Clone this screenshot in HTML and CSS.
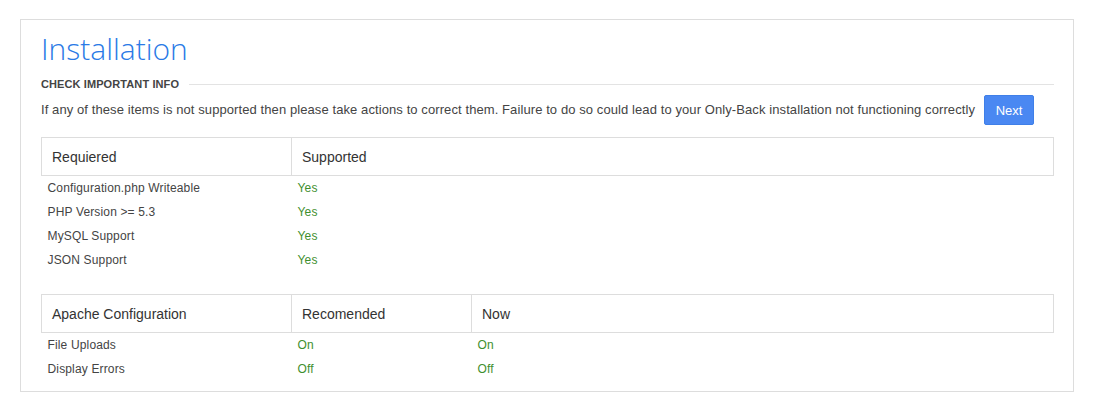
FILE: index.html
```html
<!DOCTYPE html>
<html>
<head>
<meta charset="utf-8">
<link rel="stylesheet" href="styles.css">
</head>
<body>
<div class="panel">
  <h1 class="title">Installation</h1>
  <div class="section-head">
    <span class="section-label">CHECK IMPORTANT INFO</span>
    <span class="section-line"></span>
  </div>
  <div class="notice">
    <p class="notice-text">If any of these items is not supported then please take actions to correct them. Failure to do so could lead to your Only-Back installation not functioning correctly</p>
    <button class="btn-next">Next</button>
  </div>

  <table class="req-table">
    <colgroup><col class="c1"><col></colgroup>
    <thead>
      <tr><th>Requiered</th><th>Supported</th></tr>
    </thead>
    <tbody>
      <tr><td>Configuration.php Writeable</td><td class="ok">Yes</td></tr>
      <tr><td>PHP Version &gt;= 5.3</td><td class="ok">Yes</td></tr>
      <tr><td>MySQL Support</td><td class="ok">Yes</td></tr>
      <tr><td>JSON Support</td><td class="ok">Yes</td></tr>
    </tbody>
  </table>

  <table class="req-table apache">
    <colgroup><col class="c1"><col class="c2"><col></colgroup>
    <thead>
      <tr><th>Apache Configuration</th><th>Recomended</th><th>Now</th></tr>
    </thead>
    <tbody>
      <tr><td>File Uploads</td><td class="ok">On</td><td class="ok">On</td></tr>
      <tr><td>Display Errors</td><td class="ok">Off</td><td class="ok">Off</td></tr>
    </tbody>
  </table>
</div>
</body>
</html>
```
FILE: styles.css
```css
html, body {
  margin: 0;
  padding: 0;
  background: #fff;
}
body {
  padding: 19px 20px 0 20px;
  font-family: "Liberation Sans", Arial, sans-serif;
  color: #444;
}
.panel {
  border: 1px solid #ddd;
  padding: 0 19px 10px 20px;
  width: 1013px;
  height: 361px;
}
.title {
  margin: 0;
  font-family: "Open Sans", sans-serif;
  font-weight: 300;
  font-size: 30px;
  line-height: 30px;
  padding-top: 14px;
  color: #2a7ae6;
}
.section-head {
  display: flex;
  align-items: center;
  margin-top: 12px;
  height: 16px;
}
.section-label {
  font-size: 11px;
  font-weight: bold;
  color: #444;
  letter-spacing: 0.1px;
  white-space: nowrap;
}
.section-line {
  flex: 1;
  height: 1px;
  background: #e3e3e3;
  margin-left: 10px;
}
.notice {
  display: flex;
  align-items: center;
  justify-content: space-between;
  margin-top: 3px;
  padding-right: 20px;
}
.notice-text {
  margin: 0;
  font-size: 13px;
  letter-spacing: 0.09px;
  color: #444;
  position: relative;
  top: -1px;
}
.btn-next {
  width: 50px;
  height: 30px;
  border: 1px solid #3f7fe8;
  background: #4a88f2;
  color: #fff;
  font-family: "Liberation Sans", Arial, sans-serif;
  font-size: 13px;
  border-radius: 2px;
  padding: 0;
}
.req-table {
  width: 100%;
  border-collapse: collapse;
  margin-top: 12px;
}
.req-table.apache {
  margin-top: 22px;
}
.c1 { width: 250px; }
.c2 { width: 180px; }
.req-table th {
  border: 1px solid #ddd;
  text-align: left;
  font-weight: normal;
  font-size: 14px;
  color: #333;
  height: 37px;
  padding: 0 10px;
}
.req-table td {
  font-size: 12px;
  letter-spacing: 0.15px;
  color: #444;
  padding: 0 6px;
  height: 24px;
}
.req-table td.ok {
  color: #3f8f2f;
}
```
